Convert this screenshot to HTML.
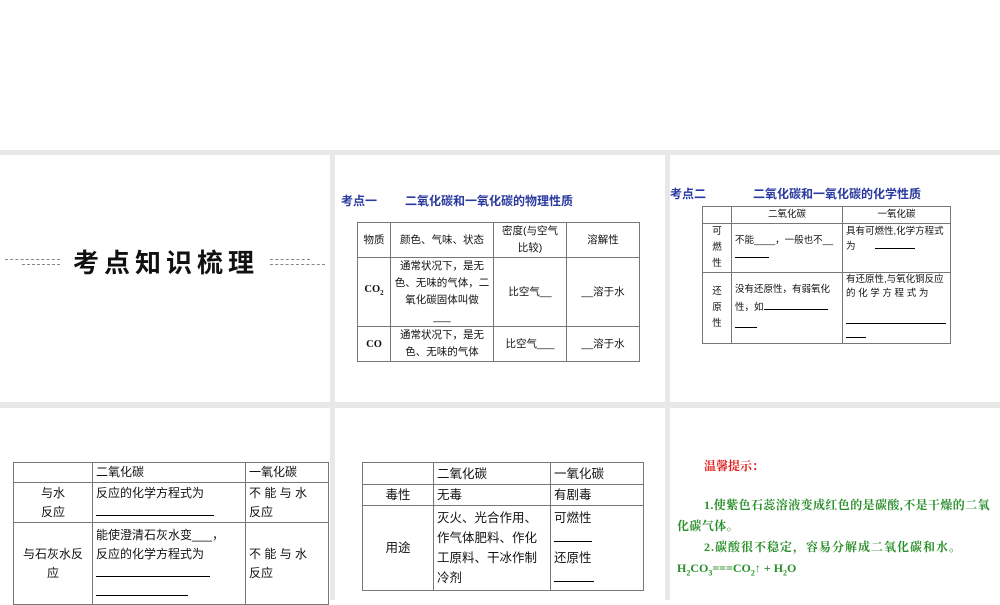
<!DOCTYPE html>
<html><head><meta charset="utf-8"><style>
body{margin:0;width:1000px;height:600px;background:#fff;position:relative;overflow:hidden;font-family:"Liberation Serif","Noto Serif CJK SC","Noto Sans CJK SC",serif;}
.bg{position:absolute;left:0;top:150px;width:1000px;height:450px;background:#e8e8e8;}
.p{position:absolute;background:#fff;}
.a{position:absolute;}
table{position:absolute;border-collapse:collapse;font-family:"Liberation Sans","Noto Sans CJK SC",sans-serif;color:#111;}
td{border:1px solid #777;padding:0 3px;vertical-align:middle;}
.u{display:inline-block;border-bottom:1px solid #000;}
</style></head><body>
<div class="bg"></div>
<div class="p" style="left:0;top:155px;width:330px;height:247px"></div>
<div class="p" style="left:335px;top:155px;width:330px;height:247px"></div>
<div class="p" style="left:670px;top:155px;width:330px;height:247px"></div>
<div class="p" style="left:0;top:408px;width:330px;height:192px"></div>
<div class="p" style="left:335px;top:408px;width:330px;height:192px"></div>
<div class="p" style="left:670px;top:408px;width:330px;height:192px"></div>

<div class="a" style="left:5px;top:259px;width:55px;border-top:1px dashed #888"></div>
<div class="a" style="left:22px;top:264px;width:38px;border-top:1px dashed #888"></div>
<div class="a" style="left:270px;top:259px;width:40px;border-top:1px dashed #888"></div>
<div class="a" style="left:270px;top:264px;width:55px;border-top:1px dashed #888"></div>
<div class="a" style="left:73px;top:243px;font:bold 26px 'Noto Sans CJK SC',sans-serif;letter-spacing:5px;color:#111">考点知识梳理</div>

<div class="a" style="left:341px;top:192px;font:bold 12px 'Noto Sans CJK SC',sans-serif;color:#2a3aa0;">考点一</div>
<div class="a" style="left:405px;top:192px;font:bold 12px 'Noto Sans CJK SC',sans-serif;color:#2a3aa0;">二氧化碳和一氧化碳的物理性质</div>
<table style="left:357px;top:222px;width:283px;font-size:10.5px;text-align:center;line-height:17px">
<tr style="height:35px"><td style="width:26px">物质</td><td style="width:96px">颜色、气味、状态</td><td style="width:66px">密度(与空气比较)</td><td>溶解性</td></tr>
<tr style="height:68px"><td><b style="font-family:'Liberation Serif'">CO<sub style="font-size:7px">2</sub></b></td><td>通常状况下，是无色、无味的气体，二氧化碳固体叫做<br>___</td><td>比空气__</td><td>__溶于水</td></tr>
<tr style="height:33px"><td><b style="font-family:'Liberation Serif'">CO</b></td><td>通常状况下，是无色、无味的气体</td><td>比空气___</td><td>__溶于水</td></tr>
</table>

<div class="a" style="left:670px;top:185px;font:bold 12px 'Noto Sans CJK SC',sans-serif;color:#2a3aa0;">考点二</div>
<div class="a" style="left:753px;top:185px;font:bold 12px 'Noto Sans CJK SC',sans-serif;color:#2a3aa0;">二氧化碳和一氧化碳的化学性质</div>
<table style="left:702px;top:206px;width:249px;font-size:9.5px;line-height:15px">
<tr style="height:17px"><td style="width:22px"></td><td style="width:104px;text-align:center;line-height:14px">二氧化碳</td><td style="text-align:center;line-height:14px">一氧化碳</td></tr>
<tr style="height:49px"><td style="text-align:center;line-height:16px">可<br>燃<br>性</td><td>不能____，一般也不__<br><span class="u" style="width:34px"></span></td><td style="vertical-align:top">具有可燃性,化学方程式　为　　<span class="u" style="width:40px"></span></td></tr>
<tr style="height:66px"><td style="text-align:center;line-height:16px">还<br>原<br>性</td><td style="line-height:18px">没有还原性，有弱氧化性，如<span class="u" style="width:64px"></span><br><span class="u" style="width:22px"></span></td><td style="vertical-align:top;line-height:14px">有还原性,与氧化铜反应 的 化 学 方 程 式 为<br><br><span class="u" style="width:100px"></span><br><span class="u" style="width:20px"></span></td></tr>
</table>

<table style="left:13px;top:462px;width:316px;font-size:12px;line-height:19px">
<tr style="height:19px"><td style="width:72px"></td><td style="width:146px">二氧化碳</td><td>一氧化碳</td></tr>
<tr style="height:40px"><td style="text-align:center">与水<br>反应</td><td>反应的化学方程式为<br><span class="u" style="width:118px"></span></td><td>不 能 与 水<br>反应</td></tr>
<tr style="height:82px"><td style="text-align:center">与石灰水反<br>应</td><td>能使澄清石灰水变___，<br>反应的化学方程式为<br><span class="u" style="width:114px"></span><br><span class="u" style="width:92px"></span></td><td>不 能 与 水<br>反应</td></tr>
</table>

<table style="left:362px;top:462px;width:282px;font-size:12.5px;line-height:20px">
<tr style="height:22px"><td style="width:64px"></td><td style="width:110px">二氧化碳</td><td>一氧化碳</td></tr>
<tr style="height:21px"><td style="text-align:center">毒性</td><td>无毒</td><td>有剧毒</td></tr>
<tr style="height:85px"><td style="text-align:center">用途</td><td>灭火、光合作用、作气体肥料、作化工原料、干冰作制冷剂</td><td>可燃性<br><span class="u" style="width:38px"></span><br>还原性<br><span class="u" style="width:40px"></span></td></tr>
</table>

<div class="a" style="left:704px;top:457px;font:bold 12px 'Noto Serif CJK SC',serif;color:#e02020">温馨提示：</div>
<div class="a" style="left:677px;top:495px;width:318px;font:bold 12px/21px 'Liberation Serif','Noto Serif CJK SC',serif;color:#2a8f2a;text-indent:27px;letter-spacing:0.4px">1.使紫色石蕊溶液变成红色的是碳酸,不是干燥的二氧化碳气体。</div>
<div class="a" style="left:677px;top:537px;width:318px;font:bold 12px/21px 'Liberation Serif','Noto Serif CJK SC',serif;color:#2a8f2a;text-indent:27px;letter-spacing:1px">2.碳酸很不稳定，容易分解成二氧化碳和水。</div>
<div class="a" style="left:677px;top:558px;font:bold 12px/21px 'Liberation Serif',serif;color:#2a8f2a">H<sub style="font-size:8px">2</sub>CO<sub style="font-size:8px">3</sub>===CO<sub style="font-size:8px">2</sub>↑ + H<sub style="font-size:8px">2</sub>O</div>
</body></html>
